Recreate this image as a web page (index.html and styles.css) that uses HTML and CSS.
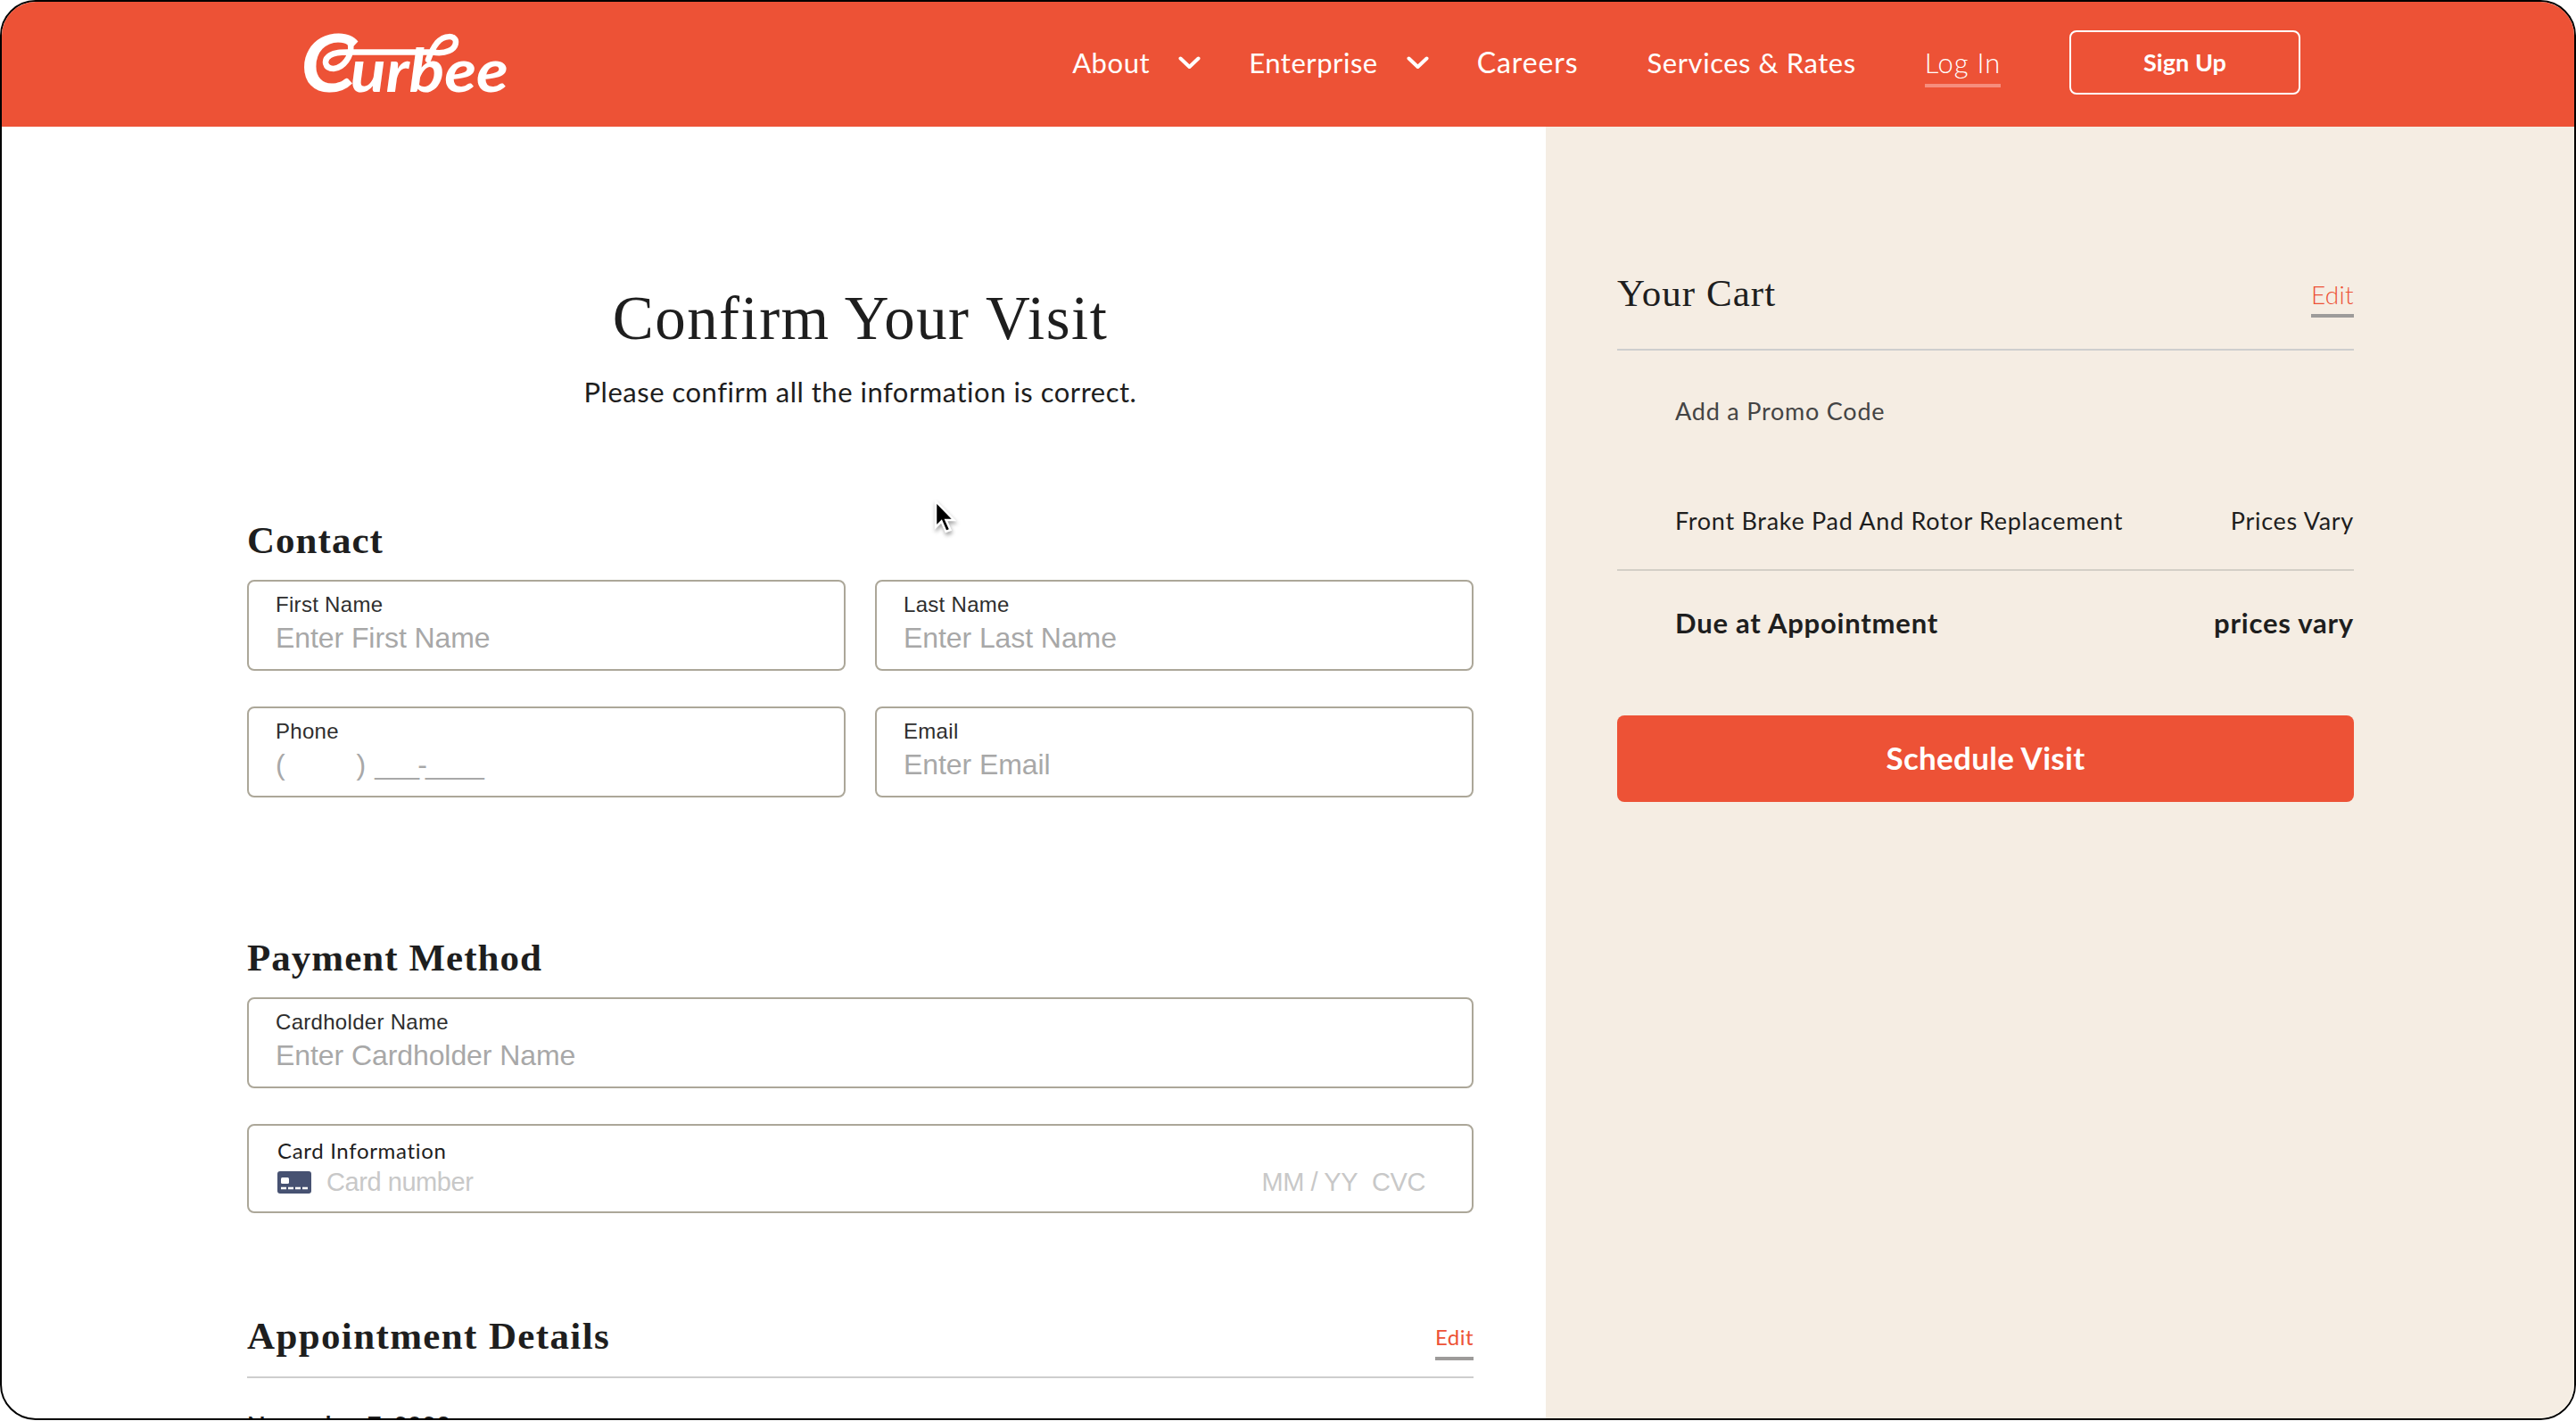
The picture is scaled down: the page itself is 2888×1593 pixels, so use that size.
FILE: index.html
```html
<!DOCTYPE html>
<html lang="en">
<head>
    <meta charset="UTF-8">
    <meta name="viewport" content="width=device-width, initial-scale=1.0">
    <title>Curbee - Confirm Your Visit</title>
    <link rel="stylesheet" href="styles.css">
</head>
<body>
<div class="window">
    <header class="header">
        <a class="logo">
            <svg width="232" height="72" viewBox="0 0 232 72">
                <text x="-2" y="69" textLength="233" lengthAdjust="spacingAndGlyphs"><tspan class="logo-cap">C</tspan><tspan class="logo-rest" dx="-6">urbee</tspan></text>
                <path class="logo-swash" d="M54 16 C56 29 46 42 35 43 C25 43 23 33 31 28 C37 24 45 24.500 54 24.500 H146 C160 27 172 22 172 13 C172 5 159 5 151 14 C147 19 144 25 141 33"/>
            </svg>
        </a>
        <nav class="nav">
            <a>About</a>
            <svg class="chevron" width="25" height="15" viewBox="0 0 25 15"><path d="M2.500 2.500l10 9.500 10-9.500"/></svg>
            <a>Enterprise</a>
            <svg class="chevron" width="25" height="15" viewBox="0 0 25 15"><path d="M2.500 2.500l10 9.500 10-9.500"/></svg>
            <a class="careers">Careers</a>
            <a>Services &amp; Rates</a>
            <a class="login">Log In</a>
            <a class="signup">Sign Up</a>
        </nav>
    </header>

    <main class="main">
        <section class="form">
            <h1>Confirm Your Visit</h1>
            <p class="subtitle">Please confirm all the information is correct.</p>

            <h2>Contact</h2>
            <div class="fields">
                <div class="field">
                    <label>First Name</label>
                    <div class="value">Enter First Name</div>
                </div>
                <div class="field">
                    <label>Last Name</label>
                    <div class="value">Enter Last Name</div>
                </div>
                <div class="field">
                    <label>Phone</label>
                    <div class="value phone">
                        <span>(</span>
                        <span class="phone-close">)</span>
                        <span class="phone-rest">___-____</span>
                    </div>
                </div>
                <div class="field">
                    <label>Email</label>
                    <div class="value">Enter Email</div>
                </div>
            </div>

            <h2 class="payment">Payment Method</h2>
            <div class="field">
                <label>Cardholder Name</label>
                <div class="value">Enter Cardholder Name</div>
            </div>
            <div class="field card">
                <label>Card Information</label>
                <div class="card-row">
                    <svg class="card-icon" width="38" height="25" viewBox="0 0 38 25">
                        <rect width="38" height="25" rx="3" fill="#475272"/>
                        <rect x="4" y="7" width="9" height="7" rx="1.500" fill="#fff"/>
                        <path d="M4 19h6M12 19h6M20 19h6M28 19h6" stroke="#fff" stroke-width="2.500"/>
                    </svg>
                    <span class="card-number">Card number</span>
                    <span class="card-date">MM / YY</span>
                    <span class="card-cvc">CVC</span>
                </div>
            </div>

            <div class="details-head">
                <h2>Appointment Details</h2>
                <a class="edit small">Edit</a>
            </div>
            <p class="date">November 7, 2023</p>
        </section>

        <aside class="cart">
            <div class="cart-head">
                <h3>Your Cart</h3>
                <a class="edit">Edit</a>
            </div>
            <p class="promo">Add a Promo Code</p>
            <div class="item">
                <span>Front Brake Pad And Rotor Replacement</span>
                <span>Prices Vary</span>
            </div>
            <div class="total">
                <span>Due at Appointment</span>
                <span>prices vary</span>
            </div>
            <button class="schedule">Schedule Visit</button>
        </aside>
    </main>
</div>

<svg class="cursor" width="26" height="42" viewBox="0 0 26 42">
    <path d="M2 2v29l6.500-6.500 5 11.500 5-2-5-11h9z"/>
</svg>
</body>
</html>
```
FILE: styles.css
```css
* {
    box-sizing: border-box;
    margin: 0;
    padding: 0;
}

body {
    width: 2888px;
    height: 1593px;
    overflow: hidden;
    background: #fff;
    color: #1e1e1e;
    font-family: Lato, sans-serif;
}

.window {
    width: 2888px;
    height: 1592px;
    border: 2px solid #000;
    border-radius: 40px;
    overflow: hidden;
}

.header {
    display: flex;
    align-items: center;
    justify-content: space-between;
    height: 140px;
    padding: 0 307px 4px 337px;
    background: #ed5236;
    color: #fff;
}

.logo svg {
    display: block;
    overflow: visible;
}

.logo text {
    font-family: Lato, sans-serif;
    font-style: italic;
    font-weight: 700;
    fill: #fff;
}

.logo .logo-cap {
    font-size: 90px;
}

.logo .logo-rest {
    font-size: 66px;
}

.logo-swash {
    fill: none;
    stroke: #fff;
    stroke-width: 6.500;
    stroke-linecap: round;
}

.nav {
    display: flex;
    align-items: center;
    gap: 54px;
    font-size: 31px;
    line-height: 40px;
    letter-spacing: 0.55px;
    white-space: nowrap;
}

.nav a + a {
    margin-left: 23px;
}

.nav .careers {
    font-size: 32px;
    letter-spacing: 0.9px;
}

.chevron {
    margin-left: -22px;
    fill: none;
    stroke: #fff;
    stroke-width: 4;
    stroke-linecap: round;
    stroke-linejoin: round;
}

.nav .login {
    position: relative;
    font-weight: 300;
    letter-spacing: 0.8px;
}

.login::after {
    content: "";
    position: absolute;
    left: 0;
    right: 0;
    top: 44px;
    height: 4px;
    background: #f68d7d;
}

.nav .signup {
    width: 259px;
    height: 72px;
    border: 2px solid #fff;
    border-radius: 8px;
    font-size: 27px;
    font-weight: 700;
    line-height: 68px;
    letter-spacing: 0.06px;
    text-align: center;
}

.main {
    display: flex;
    height: 1448px;
}

.form {
    width: 1731px;
    padding: 174px 81px 0 275px;
}

h1 {
    font-family: "Liberation Serif", serif;
    font-size: 69px;
    font-weight: 400;
    line-height: 82px;
    letter-spacing: 1.45px;
    text-align: center;
}

.subtitle {
    margin: 21px 0 120px;
    font-size: 31px;
    line-height: 40px;
    letter-spacing: 0.51px;
    text-align: center;
}

h2, h3 {
    margin-bottom: 18px;
    font-family: "Liberation Serif", serif;
    font-size: 43px;
    line-height: 53px;
    letter-spacing: 1.03px;
}

h3 {
    font-weight: 400;
    line-height: 54px;
}

.fields {
    display: grid;
    grid-template-columns: 1fr 1fr;
    gap: 40px 33px;
}

.field {
    height: 102px;
    padding: 12px 30px 0;
    border: 2px solid #aca799;
    border-radius: 8px;
    font-family: "Liberation Sans", sans-serif;
}

label {
    display: block;
    font-size: 24px;
    line-height: 28px;
    letter-spacing: 0.3px;
    color: #2e2e2e;
}

.value {
    margin-top: 4px;
    font-size: 32px;
    line-height: 38px;
    letter-spacing: -0.08px;
    color: #a8a8a8;
}

.phone {
    display: flex;
}

.phone-close {
    margin-left: 80px;
}

.phone-rest {
    margin-left: 10px;
    letter-spacing: -1.8px;
}

.payment {
    margin-top: 153px;
}

.card {
    height: 100px;
    margin-top: 40px;
    padding: 14px 52px 0 32px;
}

.card label {
    font-family: Lato, sans-serif;
    letter-spacing: 0.67px;
    color: #1e1e1e;
}

.card-row {
    display: flex;
    align-items: center;
    margin-top: 4px;
    font-size: 29px;
    line-height: 34px;
    letter-spacing: -0.44px;
    color: #c8c8c8;
}

.card-number {
    margin-left: 17px;
}

.card-date {
    margin-left: auto;
}

.card-cvc {
    margin-left: 16px;
}

.details-head, .cart-head {
    display: flex;
    justify-content: space-between;
    border-bottom: 2px solid #cecece;
}

.details-head {
    height: 74px;
    margin-top: 111px;
}

.details-head h2 {
    line-height: 54px;
    letter-spacing: 1.37px;
}

.cart-head {
    height: 91px;
}

.edit {
    position: relative;
    margin-top: 10px;
    font-size: 28px;
    font-weight: 300;
    line-height: 36px;
    letter-spacing: 0.3px;
    color: #ed5236;
}

.edit.small {
    font-size: 24px;
    font-weight: 400;
    letter-spacing: 0.46px;
}

.edit::after {
    content: "";
    position: absolute;
    left: 0;
    right: 0;
    top: 40px;
    height: 4px;
    background: #9d9b9a;
}

.date {
    margin-top: 34px;
    font-size: 27px;
    font-weight: 700;
    line-height: 36px;
    letter-spacing: 0.29px;
}

.cart {
    flex: 1;
    padding: 160px 247px 0 80px;
    background: #f5ede3;
}

.promo {
    margin-top: 50px;
    padding-left: 65px;
    font-size: 27px;
    line-height: 36px;
    letter-spacing: 0.78px;
    color: #444;
}

.item, .total {
    display: flex;
    justify-content: space-between;
    padding-left: 65px;
}

.item {
    height: 74px;
    margin-top: 87px;
    border-bottom: 2px solid #d3cfc7;
    font-size: 27px;
    line-height: 36px;
    letter-spacing: 0.72px;
}

.total {
    margin-top: 38px;
    font-size: 31px;
    font-weight: 700;
    line-height: 40px;
    letter-spacing: 0.78px;
}

.schedule {
    display: block;
    width: 826px;
    height: 97px;
    margin-top: 84px;
    padding-bottom: 4px;
    border: none;
    border-radius: 8px;
    background: #ed5236;
    color: #fff;
    font-family: Lato, sans-serif;
    font-size: 35px;
    font-weight: 700;
    letter-spacing: 0.28px;
}

.cursor {
    position: absolute;
    left: 1047px;
    top: 560px;
    fill: #000;
    stroke: #fff;
    stroke-width: 2.500;
    filter: drop-shadow(1px 3px 2px rgba(0, 0, 0, 0.35));
}
```
